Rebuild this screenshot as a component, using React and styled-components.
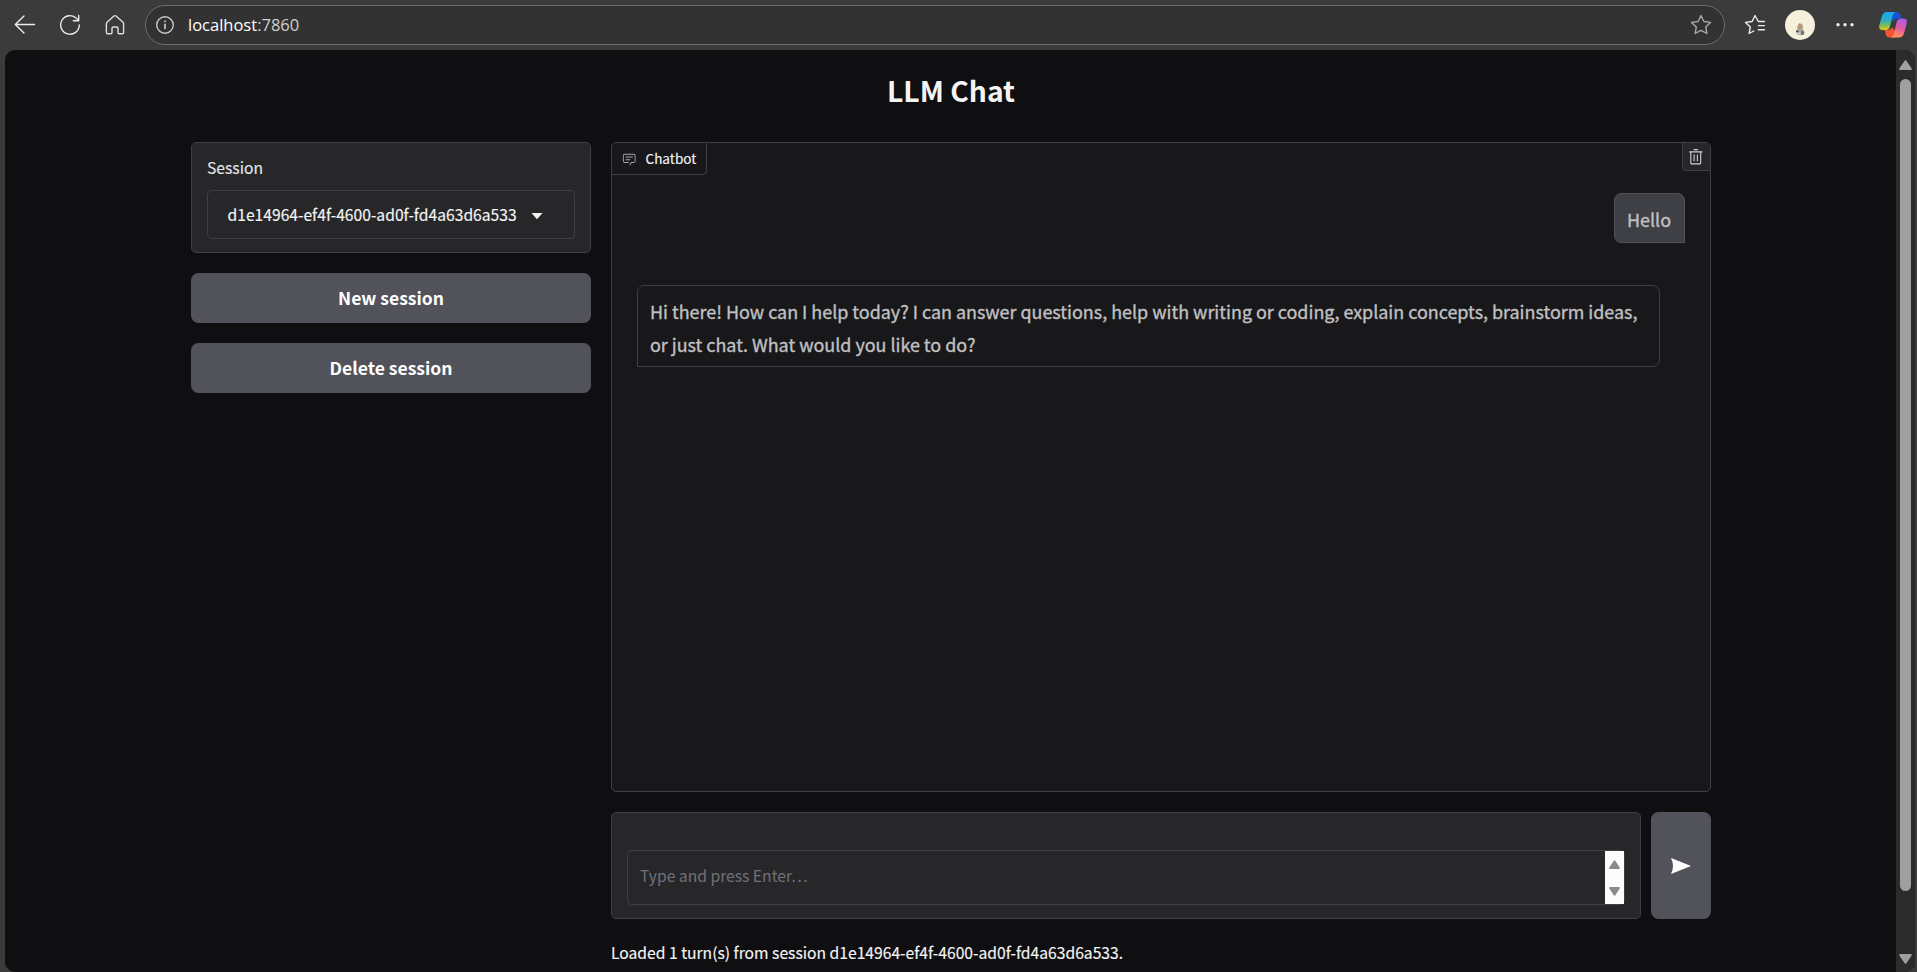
import React from "react";
import styled, { createGlobalStyle } from "styled-components";

const GlobalStyle = createGlobalStyle`
  * { box-sizing: border-box; }
  html, body { margin: 0; background: #3b3b3b; overflow: hidden; }
  body, button { font-family: "Noto Sans CJK SC", "Noto Sans", sans-serif; }
`;

const line = "#3f3f46";

const Browser = styled.div`
  display: flex;
  flex-direction: column;
  width: 100vw;
  height: 100vh;
  background: #3b3b3b;
`;

const Toolbar = styled.header`
  display: flex;
  align-items: center;
  flex: none;
  height: 50px;
  padding: 0 9px 0 10px;
`;

const NavIcons = styled.nav`
  display: flex;
  gap: 15px;
  margin-right: 15px;
`;

const ToolIcon = styled.svg`
  display: block;
  flex: none;
  width: 30px;
  height: 30px;
  fill: none;
  stroke: ${(p) => p.$tone || "#ececec"};
  stroke-width: 1.4;
  stroke-linecap: round;
  stroke-linejoin: round;
`;

const AddressBar = styled.div`
  display: flex;
  align-items: center;
  flex: 1;
  height: 40px;
  padding: 0 8px 0 4px;
  border: 1px solid #6c6c6c;
  border-radius: 20px;
  background: #323232;
`;

const Url = styled.div`
  flex: 1;
  padding: 0 0 1px 8px;
  font-family: "Open Sans", "Noto Sans", sans-serif;
  font-size: 16.5px;
  color: #fff;
`;

const Port = styled.span`
  color: #cfcfcf;
`;

const Tools = styled.div`
  display: flex;
  align-items: center;
  gap: 15px;
  margin: 0 18px 0 15px;
`;

const Viewport = styled.div`
  display: flex;
  flex: 1;
  min-height: 0;
  margin: 0 2px 0 5px;
  border-radius: 10px;
  overflow: hidden;
  background: #0f0f11;
`;

const Page = styled.main`
  flex: 1;
  padding: 0 185px 0 186px;
`;

const Title = styled.h1`
  margin: 0;
  height: 92px;
  padding-top: 20px;
  line-height: 40px;
  font-size: 28.3px;
  font-weight: 600;
  text-align: center;
  color: #f4f4f5;
`;

const Columns = styled.div`
  display: grid;
  grid-template-columns: 400px 1100px;
  gap: 20px;
`;

const Stack = styled.div`
  display: flex;
  flex-direction: column;
  gap: 20px;
`;

const Card = styled.section`
  border: 1px solid ${line};
  border-radius: 5px;
  background: #27272a;
`;

const SessionCard = styled(Card)`
  height: 111px;
  padding: 16px 15px 15px;
`;

const FieldLabel = styled.div`
  height: 18px;
  margin-bottom: 13px;
  line-height: 18px;
  font-size: 15.67px;
  color: #e4e4e7;
  -webkit-text-stroke: 0.15px;
`;

const Dropdown = styled.div`
  display: flex;
  align-items: center;
  height: 49px;
  padding: 0 20px 1px 19.5px;
  border: 1px solid ${line};
  border-radius: 5px;
  font-size: 15.67px;
  color: #f4f4f5;
  -webkit-text-stroke: 0.15px;
`;

const Caret = styled.svg`
  width: 12px;
  height: 8px;
  margin: 4px 0 0 14px;
  fill: #f4f4f5;
`;

const Button = styled.button`
  display: flex;
  align-items: center;
  justify-content: center;
  height: 50px;
  padding: 0 0 2px;
  border: 0;
  border-radius: 7.5px;
  background: #52525b;
  color: #fff;
  font-size: 17.5px;
  font-weight: 600;
`;

const ChatPanel = styled(Card)`
  height: 650px;
  background: #18181b;
  overflow: hidden;
`;

const ChatHeader = styled.div`
  display: flex;
  justify-content: space-between;
  align-items: flex-start;
  height: 50px;
`;

const ChatTab = styled.div`
  display: flex;
  align-items: center;
  width: 95px;
  height: 32px;
  padding: 0 0 1px 10px;
  border: solid ${line};
  border-width: 0 1px 1px 0;
  border-radius: 0 0 5px 0;
  font-size: 13.55px;
  color: #f4f4f5;
  -webkit-text-stroke: 0.15px;
`;

const ChatGlyph = styled.svg`
  width: 14.5px;
  height: 14.5px;
  margin: 2px 9px 0 0;
  fill: #a6a6ab;
`;

const ClearButton = styled.div`
  display: flex;
  align-items: center;
  justify-content: center;
  width: 28px;
  height: 28px;
  padding-right: 1px;
  border: solid ${line};
  border-width: 0 0 1px 1px;
  border-radius: 0 0 0 4px;
  background: #27272a;
`;

const TrashGlyph = styled.svg`
  width: 17.5px;
  height: 17.5px;
  fill: #d4d4d8;
`;

const Messages = styled.div`
  display: flex;
  flex-direction: column;
  gap: 42px;
  padding: 0 25px;
`;

const Bubble = styled.div`
  align-self: ${(p) => (p.$user ? "flex-end" : "flex-start")};
  width: ${(p) => (p.$user ? "71px" : "1023px")};
  height: ${(p) => (p.$user ? "50px" : "82px")};
  padding: 9px 0 0 12px;
  border: 1px solid ${(p) => (p.$user ? "#52525b" : line)};
  border-radius: ${(p) => (p.$user ? "7.5px 7.5px 0 7.5px" : "7.5px 7.5px 7.5px 0")};
  background: ${(p) => (p.$user ? line : "transparent")};
  font-size: 17.92px;
  line-height: 33px;
  white-space: nowrap;
  color: #c0c0c2;
  -webkit-text-stroke: 0.35px;
`;

const Composer = styled.div`
  display: flex;
  gap: 10px;
  height: 107px;
`;

const InputCard = styled(Card)`
  flex: 1;
  padding: 37px 15px 0 15px;
`;

const TextBox = styled.div`
  display: flex;
  justify-content: space-between;
  height: 55px;
  border: 1px solid ${line};
  border-radius: 5px;
`;

const Placeholder = styled.span`
  padding-left: 12px;
  line-height: 50px;
  font-size: 15.67px;
  color: #71717a;
`;

const MiniScroll = styled.div`
  display: flex;
  flex-direction: column;
  align-items: center;
  justify-content: space-between;
  width: 19px;
  padding: 9px 0 8px;
  background: #fcfcfc;
`;

const SendButton = styled(Button)`
  width: 60px;
  height: 107px;
  padding: 0;
`;

const SendGlyph = styled.svg`
  width: 20px;
  height: 16px;
  fill: #fff;
`;

const Status = styled.p`
  margin: 0;
  line-height: 27px;
  font-size: 15.67px;
  color: #f4f4f5;
  -webkit-text-stroke: 0.15px;
`;

const ScrollTrack = styled.aside`
  display: flex;
  flex-direction: column;
  align-items: center;
  width: 19px;
  padding: 10px 0 8px;
  background: #2b2b2b;
`;

const ScrollThumb = styled.div`
  width: 11px;
  height: 812px;
  margin: 9px 0 63px;
  border-radius: 6px;
  background: #9f9f9f;
`;

const ArrowGlyph = styled.svg`
  flex: none;
  width: ${(p) => p.$w}px;
  height: ${(p) => p.$h}px;
  fill: ${(p) => p.$tone};
  transform: ${(p) => (p.$down ? "rotate(180deg)" : "none")};
`;

function ScrollArrow({ w = 13, h = 10, tone = "#9f9f9f", down }) {
  return (
    <ArrowGlyph $w={w} $h={h} $tone={tone} $down={down} viewBox="0 0 13 10" preserveAspectRatio="none">
      <path d="M5.6.8Q6.5-.5 7.4.8L12.7 8.4Q13.2 10 11.8 10H1.2Q-.2 10 .3 8.4Z" />
    </ArrowGlyph>
  );
}

const starPath = "M15 5.500l2.900 6 6.600.9-4.800 4.600 1.200 6.500-5.900-3.100-5.900 3.100 1.200-6.500-4.800-4.600 6.600-.9z";

function Avatar() {
  return (
    <ToolIcon viewBox="0 0 30 30">
      <circle cx="15" cy="15" r="15" fill="#f3f0dc" stroke="none" />
      <g stroke="none" transform="translate(0 5)">
        <path d="M13.200 9.500l1.300-1.600 1.600.8 1.600 1.100.3 3.200-2 2.300-3-.6-.9-2z" fill="#b79a7c" />
        <path d="M11.800 14.600l3.400-.8 3.200.8.9 2.600-.5 2.100-3 .9-3-.5-1.400-2z" fill="#aaa6a0" />
        <path d="M11 15.500l2.500.2-.3 1.600-2.100-.2z" fill="#4a4542" />
        <path d="M16.300 16l2.800.6-.2 2.800-2.600.5z" fill="#666b75" />
        <path d="M12.500 18l2.700-.7.5 1.500-2.500.6z" fill="#e5d3b7" />
      </g>
    </ToolIcon>
  );
}

function Copilot() {
  return (
    <ToolIcon viewBox="0 0 30 30">
      <defs>
        <linearGradient id="cool" x1="0" y1="0" x2="0" y2="1">
          <stop offset="0" stopColor="#19a5f2" />
          <stop offset=".45" stopColor="#2aafc4" />
          <stop offset=".75" stopColor="#7bbd58" />
          <stop offset="1" stopColor="#f2c80f" />
        </linearGradient>
        <linearGradient id="warm" x1=".6" y1="0" x2=".3" y2="1">
          <stop offset="0" stopColor="#a95bea" />
          <stop offset=".5" stopColor="#e85a9f" />
          <stop offset="1" stopColor="#ff9a55" />
        </linearGradient>
      </defs>
      <g stroke="none">
        <path d="M14 2h4.500q3 0 3.800 3l1 3.500h-4q-2.500 0-3.300 2.700L12 8z" fill="#1753d3" />
        <path d="M16 27.500h-4.500q-3 0-3.800-3L6.700 20h4q2.500 0 3.300-2.700L18 22z" fill="#f4542f" />
        <path d="M9 2h8.500q-2 .6-2.800 3.500L12 16.500Q11 20 8 20H4.500Q.3 20 1.300 15L4 6Q5.300 2 9 2z" fill="url(#cool)" />
        <path d="M21 27.500h-8q2-.6 2.800-3.500l2.900-12q1-3.500 4.300-3.500h2.500q4.200 0 3.200 5L26 23.500q-1.300 4-5 4z" fill="url(#warm)" />
      </g>
    </ToolIcon>
  );
}

export default function App() {
  return (
    <Browser>
      <GlobalStyle />
      <Toolbar>
        <NavIcons>
          <ToolIcon viewBox="0 0 30 30"><path d="M24.500 14.500H5.500M14 6l-8.700 8.500L14 23" /></ToolIcon>
          <ToolIcon viewBox="0 0 30 30"><path d="M24.300 15A9.300 9.300 0 1 1 21.600 8.400L23.500 10.500M23.700 5.500v5.300h-5.400" /></ToolIcon>
          <ToolIcon viewBox="0 0 30 30" $tone="#dedede"><path d="M14 6q1-.8 2 0l7 6.300q.6.600.6 1.400v8.800q0 1.200-1.200 1.200h-3.200q-1.200 0-1.200-1.200v-4.300q0-1.200-1.200-1.200h-3.600q-1.200 0-1.200 1.200v4.300q0 1.200-1.200 1.200H7.600q-1.200 0-1.200-1.200v-8.800q0-.8.6-1.400z" /></ToolIcon>
        </NavIcons>
        <AddressBar>
          <ToolIcon viewBox="0 0 30 30" $tone="#c9c9c9">
            <circle cx="15" cy="15" r="8.300" />
            <path d="M15 14.300v4.200" strokeWidth="1.700" />
            <circle cx="15" cy="11.300" r=".6" fill="#c9c9c9" strokeWidth=".8" />
          </ToolIcon>
          <Url>localhost<Port>:7860</Port></Url>
          <ToolIcon viewBox="0 0 30 30" $tone="#a9a9a9"><path d={starPath} /></ToolIcon>
        </AddressBar>
        <Tools>
          <ToolIcon viewBox="0 0 30 30"><path d="M18.300 11.500L15 5.500l-2.900 6-6.600.9 4.800 4.600-1.200 6.500 4.700-2.500M18.300 11.500h6.200M18.300 15.600h6.200M18.300 19.700h6.200" /></ToolIcon>
          <Avatar />
          <ToolIcon viewBox="0 0 30 30">
            <g fill="#ececec" stroke="none"><circle cx="8" cy="14.700" r="1.700" /><circle cx="15" cy="14.700" r="1.700" /><circle cx="22" cy="14.700" r="1.700" /></g>
          </ToolIcon>
        </Tools>
        <Copilot />
      </Toolbar>

      <Viewport>
        <Page>
          <Title>LLM Chat</Title>
          <Columns>
            <Stack>
              <SessionCard>
                <FieldLabel>Session</FieldLabel>
                <Dropdown>
                  d1e14964-ef4f-4600-ad0f-fd4a63d6a533
                  <Caret viewBox="0 0 12 8"><path d="M.5 1h11L6 7.300z" /></Caret>
                </Dropdown>
              </SessionCard>
              <Button>New session</Button>
              <Button>Delete session</Button>
            </Stack>
            <Stack>
              <ChatPanel>
                <ChatHeader>
                  <ChatTab>
                    <ChatGlyph viewBox="0 0 32 32">
                      <path d="M17.740 30L16 29l4-7h6a2 2 0 0 0 2-2V8a2 2 0 0 0-2-2H6a2 2 0 0 0-2 2v12a2 2 0 0 0 2 2h9v2H6a4 4 0 0 1-4-4V8a4 4 0 0 1 4-4h20a4 4 0 0 1 4 4v12a4 4 0 0 1-4 4h-4.840Z" />
                      <path d="M8 10h16v2H8zM8 16h10v2H8z" />
                    </ChatGlyph>
                    Chatbot
                  </ChatTab>
                  <ClearButton>
                    <TrashGlyph viewBox="0 0 32 32">
                      <path d="M12 12h2v12h-2zM18 12h2v12h-2zM12 2h8v2h-8z" />
                      <path d="M4 6v2h2v20a2 2 0 0 0 2 2h16a2 2 0 0 0 2-2V8h2V6zm4 22V8h16v20z" />
                    </TrashGlyph>
                  </ClearButton>
                </ChatHeader>
                <Messages>
                  <Bubble $user>Hello</Bubble>
                  <Bubble>
                    Hi there! How can I help today? I can answer questions, help with writing or coding, explain concepts, brainstorm ideas,
                    <br />
                    or just chat. What would you like to do?
                  </Bubble>
                </Messages>
              </ChatPanel>
              <Composer>
                <InputCard>
                  <TextBox>
                    <Placeholder>Type and press Enter…</Placeholder>
                    <MiniScroll>
                      <ScrollArrow w={11} h={9} tone="#8b8b8b" />
                      <ScrollArrow w={11} h={9} tone="#8b8b8b" down />
                    </MiniScroll>
                  </TextBox>
                </InputCard>
                <SendButton aria-label="Send">
                  <SendGlyph viewBox="0 0 20 16"><path d="M0 0L20 8 0 16Q4 8 0 0z" /></SendGlyph>
                </SendButton>
              </Composer>
              <Status>Loaded 1 turn(s) from session d1e14964-ef4f-4600-ad0f-fd4a63d6a533.</Status>
            </Stack>
          </Columns>
        </Page>
        <ScrollTrack>
          <ScrollArrow />
          <ScrollThumb />
          <ScrollArrow down />
        </ScrollTrack>
      </Viewport>
    </Browser>
  );
}
